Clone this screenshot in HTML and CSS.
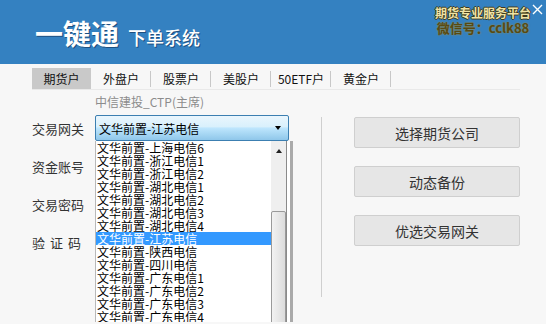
FILE: index.html
```html
<!DOCTYPE html>
<html>
<head>
<meta charset="utf-8">
<link rel="stylesheet" href="styles.css">
</head>
<body>
<div class="app">
  <header class="header">
    <div class="brand">
      <span class="brand-main">一键通</span>
      <span class="brand-sub">下单系统</span>
    </div>
    <div class="promo">
      <div class="promo-top">期货专业服务平台</div>
      <div class="promo-bottom">微信号：cclk88</div>
    </div>
    <div class="close">
      <svg width="11" height="11" viewBox="0 0 11 11"><path d="M1 1L10 10M10 1L1 10" stroke="#fff" stroke-width="1.4" fill="none"/></svg>
    </div>
  </header>

  <nav class="tabs">
    <div class="tab active">期货户</div>
    <div class="tab">外盘户</div>
    <div class="tab">股票户</div>
    <div class="tab">美股户</div>
    <div class="tab">50ETF户</div>
    <div class="tab">黄金户</div>
  </nav>

  <main class="main">
    <section class="form">
      <div class="broker">中信建投_CTP(主席)</div>
      <div class="row">
        <label class="label">交易网关</label>
        <div class="combo">
          <span class="combo-text">文华前置-江苏电信</span>
          <span class="combo-arrow"></span>
        </div>
      </div>
      <div class="row"><label class="label">资金账号</label></div>
      <div class="row"><label class="label">交易密码</label></div>
      <div class="row"><label class="label spaced">验证码</label></div>

      <div class="dropdown">
        <ul class="options">
          <li>文华前置-上海电信6</li>
          <li>文华前置-浙江电信1</li>
          <li>文华前置-浙江电信2</li>
          <li>文华前置-湖北电信1</li>
          <li>文华前置-湖北电信2</li>
          <li>文华前置-湖北电信3</li>
          <li>文华前置-湖北电信4</li>
          <li class="selected">文华前置-江苏电信</li>
          <li>文华前置-陕西电信</li>
          <li>文华前置-四川电信</li>
          <li>文华前置-广东电信1</li>
          <li>文华前置-广东电信2</li>
          <li>文华前置-广东电信3</li>
          <li>文华前置-广东电信4</li>
        </ul>
        <div class="scrollbar">
          <span class="scroll-up"></span>
          <div class="thumb"></div>
        </div>
      </div>
    </section>

    <div class="divider"></div>

    <section class="actions">
      <button class="btn">选择期货公司</button>
      <button class="btn">动态备份</button>
      <button class="btn">优选交易网关</button>
    </section>
  </main>
</div>
</body>
</html>
```

FILE: styles.css
```css
* { box-sizing: border-box; margin: 0; padding: 0; }
html, body { width: 546px; height: 324px; overflow: hidden; }
body {
  background: #f7f7f7;
  font-family: "Noto Sans CJK SC", "Liberation Sans", sans-serif;
  color: #222;
}
.app { width: 546px; height: 324px; position: relative; overflow: hidden; }

.header {
  height: 64px;
  background: #3481c1;
  display: flex;
  align-items: flex-start;
}
.brand {
  padding-left: 35px;
  padding-top: 15px;
  display: flex;
  align-items: baseline;
  color: #fff;
}
.brand-main {
  font-size: 28px;
  line-height: 36px;
  font-weight: bold;
  text-shadow: 1px 1px 0 #1d4f80;
}
.brand-sub {
  font-size: 18px;
  margin-left: 9px;
  font-weight: 500;
  text-shadow: 1px 1px 0 #1d4f80;
}
.promo {
  margin-left: auto;
  padding-top: 5px;
  text-align: center;
  width: 98px;
}
.promo-top {
  font-size: 12px;
  line-height: 15px;
  font-weight: bold;
  color: #efe3a6;
  text-shadow: 1px 0 0 #3f3a1c, -1px 0 0 #3f3a1c, 0 1px 0 #3f3a1c, 0 -1px 0 #3f3a1c;
}
.promo-bottom {
  font-size: 13px;
  line-height: 16px;
  font-weight: bold;
  color: #574a12;
  text-shadow: 0 0 2px #9c8f4c;
}
.close {
  width: 14px;
  padding-top: 4px;
  display: flex;
}

.tabs {
  margin-top: 4px;
  margin-left: 32px;
  width: 488px;
  height: 22px;
  display: flex;
  border-bottom: 1px solid #e9e9e9;
}
.tab {
  width: 60px;
  height: 21px;
  font-size: 12px;
  line-height: 21px;
  text-align: center;
  position: relative;
  color: #111;
}
.tab::after {
  content: "";
  position: absolute;
  right: 0;
  top: 3px;
  height: 16px;
  border-right: 1px solid #c8c8c8;
}
.tab.active { background: #c9c9c9; width: 59px; }
.tab.active::after { display: none; }

.main {
  display: flex;
  padding-left: 32px;
  position: relative;
}
.form {
  width: 257px;
  position: relative;
  display: flex;
  flex-direction: column;
  gap: 12px;
}
.broker {
  margin-top: 4px;
  padding-left: 63px;
  font-size: 12px;
  line-height: 15px;
  color: #8c8c8c;
  margin-bottom: -6px;
}
.row {
  display: flex;
  align-items: center;
  height: 26px;
}
.label {
  width: 63px;
  font-size: 13px;
  color: #333;
}
.label.spaced { letter-spacing: 5px; }
.combo {
  width: 194px;
  height: 26px;
  border: 1px solid #3c7fb1;
  border-radius: 2px;
  background: linear-gradient(#eaf6fd 0%, #d9f0fc 45%, #bee6fd 50%, #8fc7ea 100%);
  display: flex;
  align-items: center;
  padding-left: 3px;
  padding-right: 7px;
}
.combo-text { font-size: 12px; color: #000; flex: 1; }
.combo-arrow {
  width: 0; height: 0;
  border-left: 3.5px solid transparent;
  border-right: 3.5px solid transparent;
  border-top: 4px solid #000;
}

.dropdown {
  position: absolute;
  left: 63px;
  top: 51px;
  width: 195px;
  height: 181px;
  overflow: hidden;
  display: flex;
  background: #fff;
  border-left: 1px solid #b9b9b9;
  box-shadow: 3px 0 0 #aaa;
}
.options {
  list-style: none;
  width: 175px;
  flex: none;
}
.options li {
  height: 13px;
  font-size: 12px;
  line-height: 13px;
  color: #000;
  padding-left: 1px;
  white-space: nowrap;
}
.options li.selected { background: #3399ff; color: #fff; }
.scrollbar {
  width: 16px;
  flex: none;
  background: #efefef;
  border-right: 1px solid #8a8a8a;
  position: relative;
}
.scroll-up {
  position: absolute;
  left: 5px;
  top: 8px;
  width: 0; height: 0;
  border-left: 3.5px solid transparent;
  border-right: 3.5px solid transparent;
  border-bottom: 4px solid #222;
}
.thumb {
  position: absolute;
  left: 0;
  top: 70px;
  width: 15px;
  height: 140px;
  border: 1px solid #9a9a9a;
  border-radius: 2px;
  background: linear-gradient(90deg, #f2f2f2, #dcdcdc);
}

.divider {
  width: 1px;
  height: 180px;
  background: #cfcfcf;
  margin-left: 32px;
  margin-top: 27px;
}
.actions {
  margin-left: 32px;
  margin-top: 27px;
  display: flex;
  flex-direction: column;
  gap: 18px;
}
.btn {
  width: 166px;
  height: 31px;
  border: 1px solid #cfcfcf;
  border-radius: 2px;
  background: #e6e6e6;
  font-family: "Noto Sans CJK SC", sans-serif;
  font-size: 14px;
  color: #333;
}
```
